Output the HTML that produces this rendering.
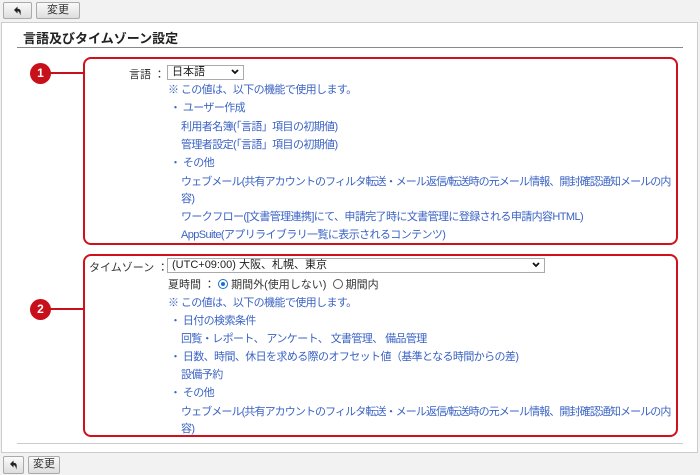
<!DOCTYPE html>
<html><head><meta charset="utf-8"><style>
*{margin:0;padding:0;box-sizing:border-box}
body{width:700px;height:475px;background:#f2f2f2;font-family:"Liberation Sans","Noto Sans CJK JP",sans-serif;font-size:11px;color:#333;position:relative;overflow:hidden}
.btn{position:absolute;height:17px;border:1px solid #aaa;border-radius:2px;background:linear-gradient(#fafafa,#ddd);font-size:11px;text-align:center;line-height:15px;color:#333}
.btn svg{margin-top:3px}
.panel{position:absolute;left:1px;top:22px;width:697px;height:431px;background:#fff;border:1px solid #ccc}
.a{position:absolute;white-space:nowrap}
.b{color:#3b63c4;letter-spacing:-0.6px}
.l{letter-spacing:-0.9px}
.box{position:absolute;border:2px solid #d0101a;border-radius:8px}
.circ{position:absolute;width:21px;height:21px;border-radius:50%;background:#c8101a;color:#fff;font-weight:bold;font-size:12px;text-align:center;line-height:21px}
.hl{position:absolute;height:2px;background:#c8101a}
.sel{position:absolute;border:1px solid #aaa;background:#fff;height:15px;line-height:13px;padding-left:4px;font-size:11px;color:#222}
.chev{position:absolute;right:4px;top:3px}
.radio{display:inline-block;width:10px;height:10px;border:1px solid #555;border-radius:50%;vertical-align:-1px;margin-right:3px;position:relative}
</style></head><body>
<div class="btn" style="left:3px;top:2px;width:29px"><svg width="10" height="10" viewBox="0 0 10 10"><path d="M1 4 L4.5 0.5 L4.5 2.8 C7.5 2.8 8.5 5 7.2 9.5 C6.8 6.5 6 5.2 4.5 5.2 L4.5 7.5 Z" fill="#222"/></svg></div>
<div class="btn" style="left:36px;top:2px;width:44px">変更</div>
<div class="panel"></div>
<div class="a" style="left:23px;top:28px;font-size:13px;font-weight:bold;color:#222">言語及びタイムゾーン設定</div>
<div class="a" style="left:17px;top:47px;width:666px;height:1px;background:#888"></div>

<div class="box" style="left:83px;top:57px;width:595px;height:188px"></div>
<div class="hl" style="left:50px;top:72px;width:34px"></div>
<div class="circ" style="left:30px;top:63px">1</div>
<div class="a" style="left:129px;top:66px">言語 ：</div>
<div class="sel" style="left:167px;top:65px;width:77px">日本語<svg class="chev" width="8" height="6" viewBox="0 0 8 6"><path d="M1 1 L4 4 L7 1" stroke="#111" stroke-width="1.8" fill="none"/></svg></div>
<div class="a b" style="left:168px;top:81px">※ この値は、以下の機能で使用します。</div>
<div class="a b" style="left:170px;top:99px">・ ユーザー作成</div>
<div class="a b" style="left:181px;top:118px">利用者名簿(「言語」項目の初期値)</div>
<div class="a b" style="left:181px;top:136px">管理者設定(「言語」項目の初期値)</div>
<div class="a b" style="left:170px;top:154px">・ その他</div>
<div class="a b l" style="left:181px;top:173px">ウェブメール(共有アカウントのフィルタ転送・メール返信/転送時の元メール情報、開封確認通知メールの内</div>
<div class="a b" style="left:181px;top:190px">容)</div>
<div class="a b" style="left:181px;top:208px">ワークフロー([文書管理連携]にて、申請完了時に文書管理に登録される申請内容HTML)</div>
<div class="a b" style="left:181px;top:226px">AppSuite(アプリライブラリ一覧に表示されるコンテンツ)</div>

<div class="box" style="left:83px;top:254px;width:595px;height:183px"></div>
<div class="hl" style="left:50px;top:308px;width:34px"></div>
<div class="circ" style="left:30px;top:299px">2</div>
<div class="a" style="left:89px;top:259px">タイムゾーン ：</div>
<div class="sel" style="left:167px;top:258px;width:378px">(UTC+09:00) 大阪、札幌、東京<svg class="chev" width="8" height="6" viewBox="0 0 8 6"><path d="M1 1 L4 4 L7 1" stroke="#111" stroke-width="1.8" fill="none"/></svg></div>
<div class="a" style="left:168px;top:276px">夏時間 ： <span class="radio" style="border-color:#1a6fd0"><span style="position:absolute;left:2px;top:2px;width:4px;height:4px;border-radius:50%;background:#1a6fd0"></span></span>期間外(使用しない) &nbsp;<span class="radio"></span>期間内</div>
<div class="a b" style="left:168px;top:294px">※ この値は、以下の機能で使用します。</div>
<div class="a b" style="left:170px;top:312px">・ 日付の検索条件</div>
<div class="a b" style="left:181px;top:330px">回覧・レポート、 アンケート、 文書管理、 備品管理</div>
<div class="a b" style="left:170px;top:348px">・ 日数、時間、休日を求める際のオフセット値（基準となる時間からの差)</div>
<div class="a b" style="left:181px;top:366px">設備予約</div>
<div class="a b" style="left:170px;top:384px">・ その他</div>
<div class="a b l" style="left:181px;top:403px">ウェブメール(共有アカウントのフィルタ転送・メール返信/転送時の元メール情報、開封確認通知メールの内</div>
<div class="a b" style="left:181px;top:420px">容)</div>
<div class="a" style="left:17px;top:443px;width:666px;height:1px;background:#ccc"></div>

<div class="btn" style="left:3px;top:456px;width:21px;height:18px"><svg width="10" height="10" viewBox="0 0 10 10"><path d="M1 4 L4.5 0.5 L4.5 2.8 C7.5 2.8 8.5 5 7.2 9.5 C6.8 6.5 6 5.2 4.5 5.2 L4.5 7.5 Z" fill="#222"/></svg></div>
<div class="btn" style="left:28px;top:456px;width:32px;height:18px">変更</div>
</body></html>
